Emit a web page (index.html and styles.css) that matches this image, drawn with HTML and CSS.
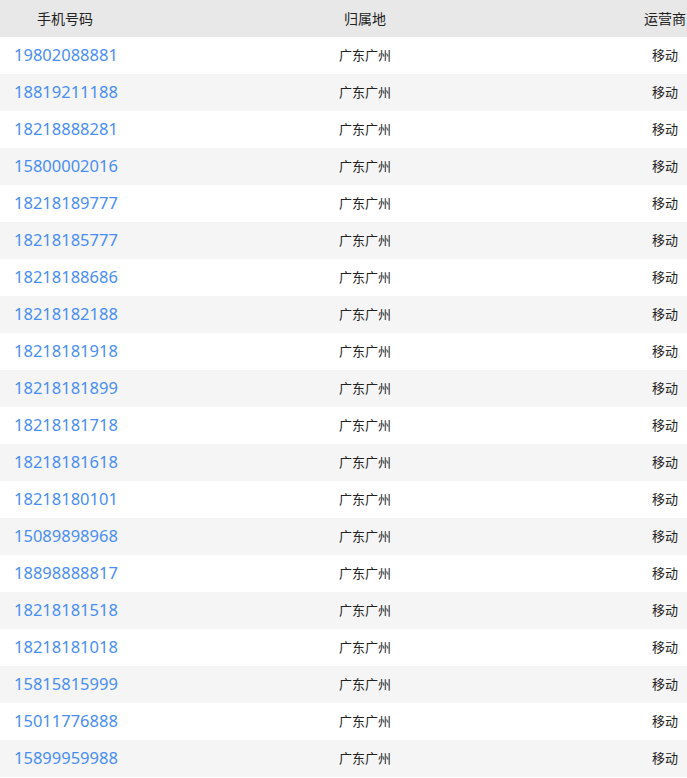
FILE: index.html
```html
<!DOCTYPE html>
<html lang="zh">
<head>
<meta charset="utf-8">
<title>号码列表</title>
<link rel="stylesheet" href="styles.css">
</head>
<body>
<div class="wrap">
<table class="nums">
<thead>
<tr><th class="c1">手机号码</th><th class="c2">归属地</th><th class="c3">运营商</th></tr>
</thead>
<tbody>
<tr><td class="num">19802088881</td><td class="loc">广东广州</td><td class="op">移动</td></tr>
<tr><td class="num">18819211188</td><td class="loc">广东广州</td><td class="op">移动</td></tr>
<tr><td class="num">18218888281</td><td class="loc">广东广州</td><td class="op">移动</td></tr>
<tr><td class="num">15800002016</td><td class="loc">广东广州</td><td class="op">移动</td></tr>
<tr><td class="num">18218189777</td><td class="loc">广东广州</td><td class="op">移动</td></tr>
<tr><td class="num">18218185777</td><td class="loc">广东广州</td><td class="op">移动</td></tr>
<tr><td class="num">18218188686</td><td class="loc">广东广州</td><td class="op">移动</td></tr>
<tr><td class="num">18218182188</td><td class="loc">广东广州</td><td class="op">移动</td></tr>
<tr><td class="num">18218181918</td><td class="loc">广东广州</td><td class="op">移动</td></tr>
<tr><td class="num">18218181899</td><td class="loc">广东广州</td><td class="op">移动</td></tr>
<tr><td class="num">18218181718</td><td class="loc">广东广州</td><td class="op">移动</td></tr>
<tr><td class="num">18218181618</td><td class="loc">广东广州</td><td class="op">移动</td></tr>
<tr><td class="num">18218180101</td><td class="loc">广东广州</td><td class="op">移动</td></tr>
<tr><td class="num">15089898968</td><td class="loc">广东广州</td><td class="op">移动</td></tr>
<tr><td class="num">18898888817</td><td class="loc">广东广州</td><td class="op">移动</td></tr>
<tr><td class="num">18218181518</td><td class="loc">广东广州</td><td class="op">移动</td></tr>
<tr><td class="num">18218181018</td><td class="loc">广东广州</td><td class="op">移动</td></tr>
<tr><td class="num">15815815999</td><td class="loc">广东广州</td><td class="op">移动</td></tr>
<tr><td class="num">15011776888</td><td class="loc">广东广州</td><td class="op">移动</td></tr>
<tr><td class="num">15899959988</td><td class="loc">广东广州</td><td class="op">移动</td></tr>
</tbody>
</table>
</div>
</body>
</html>
```
FILE: styles.css
```css
html, body {
  margin: 0;
  padding: 0;
  background: #fff;
}
body {
  font-family: "Noto Sans", "Noto Sans CJK SC", sans-serif;
  color: #333;
}
.wrap {
  width: 100%;
  overflow: hidden;
}
.nums {
  width: 730px;
  border-collapse: collapse;
  table-layout: fixed;
}
.nums th, .nums td {
  height: 37px;
  padding: 0 0 2px 0;
  box-sizing: border-box;
  vertical-align: middle;
  white-space: nowrap;
}
.nums thead tr {
  background: #e8e8e8;
}
.nums th {
  font-family: "Noto Sans CJK SC", sans-serif;
  font-weight: normal;
  font-size: 14px;
  color: #222;
  text-align: center;
}
.c1 { width: 130px; }
.c2 { width: 470px; }
.c3 { width: 130px; }
.nums tbody tr:nth-child(even) {
  background: #f5f5f5;
}
.nums .num {
  font-size: 16.5px;
  color: #4a8ef5;
  padding-left: 14px;
  text-align: left;
}
.loc, .op {
  font-family: "Noto Sans CJK SC", sans-serif;
  font-size: 13px;
  color: #222;
  text-align: center;
}
```
